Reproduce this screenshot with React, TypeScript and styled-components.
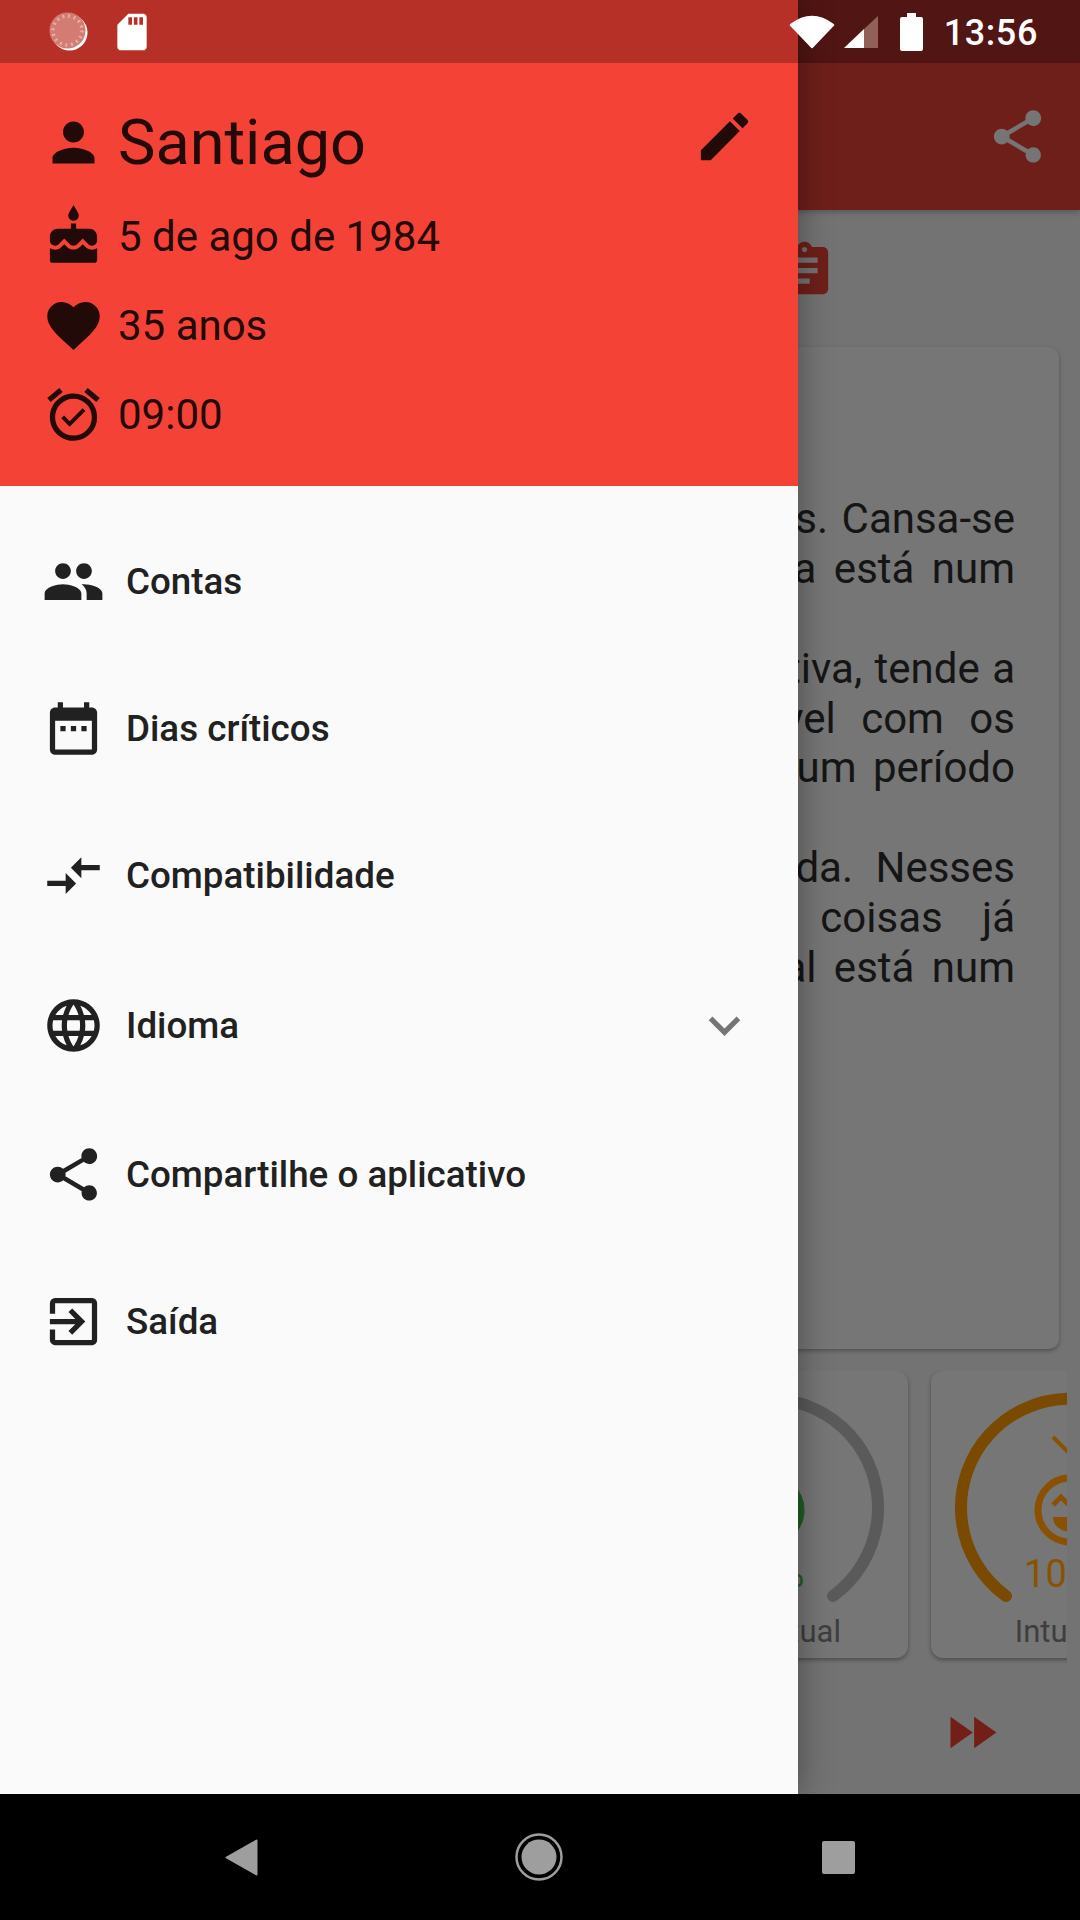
import React from "react";
import styled, { createGlobalStyle } from "styled-components";
import {
  MdAlarmOn,
  MdAssignment,
  MdCake,
  MdCompareArrows,
  MdDateRange,
  MdEdit,
  MdExitToApp,
  MdExpandMore,
  MdFastForward,
  MdFavorite,
  MdLanguage,
  MdPeople,
  MdPerson,
  MdSdCard,
  MdShare
} from "react-icons/md";

const GlobalStyle = createGlobalStyle`
  html, body {
    margin: 0;
    padding: 0;
    background: #000;
  }
  body {
    font-family: Roboto, "Liberation Sans", sans-serif;
  }
`;

const s = {
  Screen: styled.div`
    position: relative;
    display: flex;
    flex-direction: column;
    width: 1080px;
    height: 1920px;
    overflow: hidden;
    background: #000;
  `,
  StatusBar: styled.div`
    position: absolute;
    z-index: 3;
    top: 0;
    left: 0;
    right: 0;
    height: 63px;
    display: flex;
    align-items: center;
    justify-content: space-between;
    padding: 0 42px 0 49px;
    box-sizing: border-box;
    color: #fff;
  `,
  StatusGroup: styled.div<{ $gap: number }>`
    display: flex;
    align-items: center;
    gap: ${p => p.$gap}px;
  `,
  BatterySlot: styled.span`
    display: flex;
    margin-left: 13px;
  `,
  Time: styled.span`
    font-size: 36px;
    font-weight: 500;
    letter-spacing: 0.6px;
    margin: 3px 0 0 12px;
    color: #fff;
  `,
  Main: styled.div`
    flex: 1;
    display: flex;
    flex-direction: column;
    min-height: 0;
    background: #737373;
  `,
  MainStatus: styled.div`
    height: 63px;
    background: #511513;
  `,
  AppBar: styled.div`
    height: 147px;
    display: flex;
    align-items: center;
    justify-content: flex-end;
    padding-right: 31px;
    background: #6f1f1a;
    color: #757575;
    box-shadow: 0 2px 6px rgba(0, 0, 0, 0.25);
    font-size: 63px;
  `,
  Tools: styled.div`
    height: 137px;
    box-sizing: border-box;
    display: flex;
    align-items: flex-start;
    justify-content: flex-end;
    padding: 29px 244px 0 0;
    color: #6f1f1a;
    font-size: 63px;
  `,
  Card: styled.div`
    height: 1002px;
    margin: 0 21px;
    padding: 147px 44px 0 0;
    box-sizing: border-box;
    background: #767676;
    border-radius: 10px;
    box-shadow: 0 2px 4px rgba(0, 0, 0, 0.3);
  `,
  Line: styled.div<{ $wordGap?: number }>`
    height: 49.9px;
    line-height: 49.9px;
    text-align: right;
    white-space: nowrap;
    font-size: 42px;
    color: #151515;
    word-spacing: ${p => p.$wordGap || 0}px;
  `,
  Gauges: styled.div`
    display: flex;
    gap: 23px;
    height: 295px;
    margin: 22px 13px 0 21px;
    padding-left: 609px;
    overflow: hidden;
  `,
  GaugeCard: styled.div`
    flex: none;
    width: 278px;
    height: 287px;
    display: flex;
    flex-direction: column;
    align-items: center;
    background: #767676;
    border-radius: 12px;
    box-shadow: 0 2px 4px rgba(0, 0, 0, 0.35);
  `,
  GaugeLabel: styled.span`
    font-size: 31px;
    line-height: 36px;
    margin-top: 3px;
    color: #3e3e3e;
  `,
  Footer: styled.div`
    flex: 1;
    display: flex;
    align-items: flex-start;
    justify-content: flex-end;
    padding: 35px 77px 0 0;
    color: #731f19;
    font-size: 63px;
    line-height: 0;
  `,
  Nav: styled.div`
    height: 126px;
    flex: none;
    display: flex;
    align-items: center;
    background: #000;
  `,
  NavSlot: styled.div<{ $left: number }>`
    position: absolute;
    left: ${p => p.$left}px;
    display: flex;
  `,
  Drawer: styled.div`
    position: absolute;
    z-index: 2;
    top: 0;
    left: 0;
    bottom: 126px;
    width: 798px;
    display: flex;
    flex-direction: column;
    background: #fafafa;
    box-shadow: 0 0 32px rgba(0, 0, 0, 0.38);
  `,
  DrawerStatus: styled.div`
    height: 63px;
    flex: none;
    background: #b63028;
  `,
  Header: styled.div`
    height: 423px;
    flex: none;
    display: flex;
    flex-direction: column;
    gap: 27px;
    padding: 44px 42px 0 42px;
    box-sizing: border-box;
    background: #f44336;
    color: #210a08;
  `,
  HeaderRow: styled.div<{ $title?: boolean }>`
    display: flex;
    align-items: center;
    height: ${p => (p.$title ? 71 : 62)}px;
    font-size: 63px;
  `,
  HeaderText: styled.span<{ $title?: boolean }>`
    flex: 1;
    margin-left: 13px;
    font-size: ${p => (p.$title ? 63 : 42)}px;
    color: #210a08;
  `,
  EditSlot: styled.span`
    display: flex;
    margin-bottom: 13px;
  `,
  List: styled.div`
    display: flex;
    flex-direction: column;
    padding-top: 22px;
  `,
  Item: styled.div<{ $tall?: boolean }>`
    display: flex;
    align-items: center;
    height: ${p => (p.$tall ? 152 : 147)}px;
    padding: 0 42px;
    color: #212121;
    font-size: 63px;
  `,
  ItemText: styled.span`
    flex: 1;
    margin-left: 21px;
    font-size: 36.75px;
    font-weight: 500;
    color: #212121;
  `,
  Chevron: styled.span`
    display: flex;
    color: #757575;
    font-size: 63px;
  `
};

const Gauge: React.FC<{
  color: string;
  face: string;
  value: string;
  label: string;
}> = ({ color, face, value, label }) => (
  <s.GaugeCard>
    <svg width="278" height="240" viewBox="0 0 278 240">
      <path
        d="M75 225 A109 109 0 1 1 203 225"
        fill="none"
        stroke={color}
        strokeWidth="12"
        strokeLinecap="round"
      />
      <path d="M122 66 L139 83" stroke={face} strokeWidth="4" />
      <circle cx="139" cy="139" r="32" fill="none" stroke={face} strokeWidth="7" />
      <path d="M122 134 L130 126 L138 134" fill="none" stroke={face} strokeWidth="5" />
      <path d="M122 146 H156 A17 15 0 0 1 122 146 Z" fill={face} />
      <text
        x="139"
        y="216"
        textAnchor="middle"
        fontSize="38"
        fontFamily="Roboto, sans-serif"
        fill={face}
      >
        {value}
      </text>
    </svg>
    <s.GaugeLabel>{label}</s.GaugeLabel>
  </s.GaugeCard>
);

const LoaderIcon = () => (
  <svg width="40" height="40" viewBox="0 0 40 40">
    <circle cx="20.5" cy="20.5" r="18" fill="#fff" />
    <circle cx="18.5" cy="18.5" r="18" fill="#d27c74" />
    <circle
      cx="18.5"
      cy="18.5"
      r="14.5"
      fill="none"
      stroke="#e8aca5"
      strokeWidth="3.5"
      strokeDasharray="2 3.7"
    />
  </svg>
);

const WifiIcon = () => (
  <svg width="46" height="34" viewBox="0 0 46 34">
    <path
      d="M2 10 Q23 -6 44 10 L23 32 Z"
      fill="#fff"
      stroke="#fff"
      strokeWidth="2.5"
      strokeLinejoin="round"
    />
  </svg>
);

const SignalIcon = () => (
  <svg width="34" height="34" viewBox="0 0 34 34">
    <path d="M34 1 V33 H20 V14 Z" fill="#906059" />
    <path d="M0 33 L20 14 V33 Z" fill="#fff" />
  </svg>
);

const BatteryIcon = () => (
  <svg width="23" height="38" viewBox="0 0 23 38">
    <path d="M7 0 H16 V4 H21 Q23 4 23 6 V36 Q23 38 21 38 H2 Q0 38 0 36 V6 Q0 4 2 4 H7 Z" fill="#fff" />
  </svg>
);

const App: React.FC = () => (
  <s.Screen>
    <GlobalStyle />
    <s.Main>
      <s.MainStatus />
      <s.AppBar>
        <MdShare />
      </s.AppBar>
      <s.Tools>
        <MdAssignment />
      </s.Tools>
      <s.Card>
        <s.Line $wordGap={3}>dias. Cansa-se</s.Line>
        <s.Line $wordGap={7}>energia está num</s.Line>
        <s.Line />
        <s.Line $wordGap={2}>criativa, tende a</s.Line>
        <s.Line $wordGap={15}>irritável com os</s.Line>
        <s.Line $wordGap={6}>num período</s.Line>
        <s.Line />
        <s.Line $wordGap={12}>vida. Nesses</s.Line>
        <s.Line $wordGap={29}>as coisas já</s.Line>
        <s.Line $wordGap={7}>astral está num</s.Line>
      </s.Card>
      <s.Gauges>
        <Gauge color="#5a5a5a" face="#215c25" value="26%" label="Intelectual" />
        <Gauge color="#7a4a00" face="#8a5200" value="100%" label="Intuitivo" />
      </s.Gauges>
      <s.Footer>
        <MdFastForward />
      </s.Footer>
    </s.Main>
    <s.Nav>
      <s.NavSlot $left={225}>
        <svg width="33" height="37" viewBox="0 0 33 37">
          <path
            d="M31.5 1.5 V35.5 L1.5 18.5 Z"
            fill="#9e9e9e"
            stroke="#9e9e9e"
            strokeWidth="2"
            strokeLinejoin="round"
          />
        </svg>
      </s.NavSlot>
      <s.NavSlot $left={515}>
        <svg width="48" height="48" viewBox="0 0 48 48">
          <circle cx="24" cy="24" r="22.5" fill="none" stroke="#9e9e9e" strokeWidth="2.5" />
          <circle cx="24" cy="24" r="17.5" fill="#9e9e9e" />
        </svg>
      </s.NavSlot>
      <s.NavSlot $left={822}>
        <svg width="33" height="33" viewBox="0 0 33 33">
          <rect width="33" height="33" rx="2" fill="#9e9e9e" />
        </svg>
      </s.NavSlot>
    </s.Nav>

    <s.Drawer>
      <s.DrawerStatus />
      <s.Header>
        <s.HeaderRow $title>
          <MdPerson />
          <s.HeaderText $title>Santiago</s.HeaderText>
          <s.EditSlot>
            <MdEdit />
          </s.EditSlot>
        </s.HeaderRow>
        <s.HeaderRow>
          <MdCake />
          <s.HeaderText>5 de ago de 1984</s.HeaderText>
        </s.HeaderRow>
        <s.HeaderRow>
          <MdFavorite />
          <s.HeaderText>35 anos</s.HeaderText>
        </s.HeaderRow>
        <s.HeaderRow>
          <MdAlarmOn />
          <s.HeaderText>09:00</s.HeaderText>
        </s.HeaderRow>
      </s.Header>
      <s.List>
        <s.Item>
          <MdPeople />
          <s.ItemText>Contas</s.ItemText>
        </s.Item>
        <s.Item>
          <MdDateRange />
          <s.ItemText>Dias críticos</s.ItemText>
        </s.Item>
        <s.Item>
          <MdCompareArrows />
          <s.ItemText>Compatibilidade</s.ItemText>
        </s.Item>
        <s.Item $tall>
          <MdLanguage />
          <s.ItemText>Idioma</s.ItemText>
          <s.Chevron>
            <MdExpandMore />
          </s.Chevron>
        </s.Item>
        <s.Item>
          <MdShare />
          <s.ItemText>Compartilhe o aplicativo</s.ItemText>
        </s.Item>
        <s.Item>
          <MdExitToApp />
          <s.ItemText>Saída</s.ItemText>
        </s.Item>
      </s.List>
    </s.Drawer>

    <s.StatusBar>
      <s.StatusGroup $gap={21}>
        <LoaderIcon />
        <MdSdCard size={44} />
      </s.StatusGroup>
      <s.StatusGroup $gap={9}>
        <WifiIcon />
        <SignalIcon />
        <s.BatterySlot>
          <BatteryIcon />
        </s.BatterySlot>
        <s.Time>13:56</s.Time>
      </s.StatusGroup>
    </s.StatusBar>
  </s.Screen>
);

export default App;
